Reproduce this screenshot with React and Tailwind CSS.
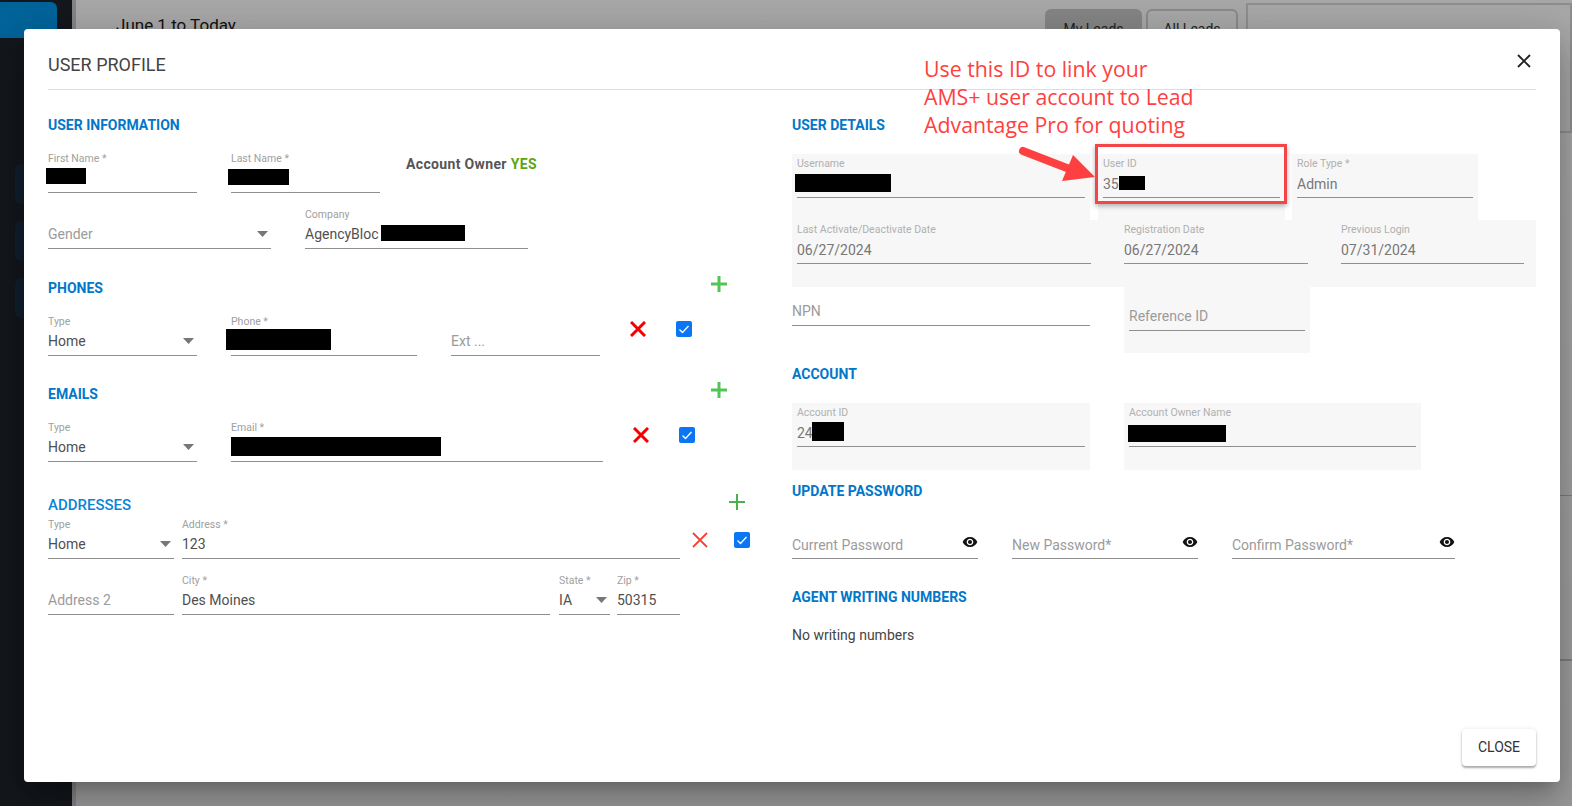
const Redact = ({ className }) => <span className={`absolute bg-black ${className}`} />

const Caret = () => (
  <svg width="11" height="6" viewBox="0 0 11 6" className="shrink-0"><path d="M0 0h11L5.5 6z" fill="#777" /></svg>
)

const Field = ({ label, value, placeholder, select, dim, lift, className = '', children }) => (
  <div className={`relative shrink-0 border-b border-[#8f8f8f] ${className}`}>
    {label && <div className={`h-[15px] pt-[1px] text-[10.5px] leading-[14px] whitespace-nowrap ${dim ? 'text-[#b0b0b0]' : 'text-[#a0a0a0]'}`}>{label}</div>}
    <div className={`flex h-[20px] items-center justify-between pr-[3px] text-[14px] leading-[20px] whitespace-nowrap ${label ? (lift ? 'mt-[2px] mb-[4px]' : 'mt-[3px] mb-[3px]') : 'mb-[4px]'} ${placeholder ? 'text-[#9b9b9b]' : dim ? 'text-[#777]' : 'text-[#4f4f4f]'}`}>
      <span>{value || placeholder}</span>
      {select && <Caret />}
    </div>
    {children}
  </div>
)

const Heading = ({ children, className = '' }) => (
  <h3 className={`h-[20px] text-[14px] leading-[21px] font-bold text-[#0277c9] whitespace-nowrap ${className}`}>{children}</h3>
)

const Plus = ({ thin }) => (
  <svg width="18" height="18" viewBox="0 0 18 18" className="shrink-0">
    <path d="M9 1v16M1 9h16" stroke={thin ? '#4caf50' : '#52c455'} strokeWidth={thin ? 2 : 3} fill="none" />
  </svg>
)

const Cross = ({ thin }) => (
  <svg width="16" height="16" viewBox="0 0 16 16" className="shrink-0">
    <path d="M1 1l14 14M15 1L1 15" stroke={thin ? '#f44336' : '#f50000'} strokeWidth={thin ? 1.8 : 3} fill="none" />
  </svg>
)

const Check = () => (
  <span className="flex h-[16px] w-[16px] shrink-0 items-center justify-center rounded-[2px] bg-[#0a75f5]">
    <svg width="12" height="12" viewBox="0 0 12 12"><path d="M1.5 6.5l3 3 6-6.5" stroke="#fff" strokeWidth="1.3" fill="none" /></svg>
  </span>
)

const Eye = () => (
  <svg width="16" height="16" viewBox="0 0 24 24" className="absolute right-0 top-[17px]">
    <path fill="#111" d="M12 4.5C7 4.5 2.73 7.61 1 12c1.73 4.39 6 7.5 11 7.5s9.27-3.11 11-7.5c-1.73-4.39-6-7.5-11-7.5zM12 17c-2.76 0-5-2.24-5-5s2.24-5 5-5 5 2.24 5 5-2.24 5-5 5zm0-8c-1.66 0-3 1.34-3 3s1.34 3 3 3 3-1.34 3-3-1.34-3-3-3z" />
  </svg>
)

const Backdrop = () => (
  <div className="flex h-[806px] w-full overflow-hidden bg-[#14171c]">
    <aside className="flex w-[72px] shrink-0 flex-col">
      <div className="mt-[2px] h-[36px] w-[57px] rounded-tr-md bg-[#00649b]" />
      <div className="mt-[126px] flex flex-col gap-[17px] pl-[15px]">
        <div className="h-[40px] w-[42px] rounded-md bg-[#11202e]" />
        <div className="h-[40px] w-[42px] rounded-md bg-[#11202e]" />
        <div className="h-[40px] w-[42px] rounded-md bg-[#11202e]" />
      </div>
    </aside>
    <main className="flex-1 border-l-[4px] border-[#858585] bg-gradient-to-b from-[#a8a8a8] to-[#9c9c9c]">
      <div className="flex items-start pt-[3px]">
        <div className="ml-[40px] mt-[10px] text-[17px] leading-6 text-[#111]">June 1 to Today</div>
        <div className="ml-auto mt-[6px] flex gap-[4px]">
          <div className="h-[40px] w-[97px] rounded-md bg-[#858585] pt-[10px] text-center text-sm text-[#222]">My Leads</div>
          <div className="h-[40px] w-[92px] rounded-md border-2 border-[#8a8a8a] pt-[8px] text-center text-sm text-[#222]">All Leads</div>
        </div>
        <div className="ml-[8px] h-[130px] w-[326px] border-2 border-[#8e8e8e]" />
      </div>
      <div className="mt-[362px] h-px bg-[#7d7d7d]" />
      <div className="mt-[163px] h-[2px] bg-[#7d7d7d]" />
    </main>
  </div>
)

const UserInfo = () => (
  <div className="w-[768px] shrink-0 pl-[24px]">
    <Heading className="mt-[25px]">USER INFORMATION</Heading>
    <div className="mt-[16px] flex items-start gap-[34px]">
      <Field lift label="First Name *" className="w-[149px]"><Redact className="left-[-2px] top-[17px] h-[16px] w-[40px]" /></Field>
      <Field lift label="Last Name *" className="w-[149px]"><Redact className="left-[-3px] top-[18px] h-[16px] w-[61px]" /></Field>
      <div className="ml-[-8px] mt-[3px] text-[14px] leading-[20px] font-bold tracking-[0.35px] text-[#555]">Account Owner <span className="text-[#5ca612]">YES</span></div>
    </div>
    <div className="mt-[14px] flex items-start gap-[34px]">
      <Field lift label=" " placeholder="Gender" select className="w-[223px]" />
      <Field lift label="Company" value="AgencyBloc" className="w-[223px]"><Redact className="left-[76px] top-[18px] h-[16px] w-[84px]" /></Field>
    </div>

    <div className="mt-[29px] flex w-[680px] items-start justify-between">
      <Heading>PHONES</Heading>
      <div className="mt-[-3px]"><Plus /></div>
    </div>
    <div className="mt-[16px] flex items-start">
      <Field lift label="Type" value="Home" select className="w-[149px]" />
      <Field lift label="Phone *" className="ml-[34px] w-[186px]"><Redact className="left-[-5px] top-[15px] h-[21px] w-[105px]" /></Field>
      <Field lift label=" " placeholder="Ext ..." className="ml-[34px] w-[149px]" />
      <div className="ml-[30px] mt-[7px]"><Cross /></div>
      <div className="ml-[30px] mt-[7px]"><Check /></div>
    </div>

    <div className="mt-[28px] flex w-[680px] items-start justify-between">
      <Heading>EMAILS</Heading>
      <div className="mt-[-3px]"><Plus /></div>
    </div>
    <div className="mt-[16px] flex items-start">
      <Field lift label="Type" value="Home" select className="w-[149px]" />
      <Field lift label="Email *" className="ml-[34px] w-[372px]"><Redact className="left-0 top-[17px] h-[19px] w-[210px]" /></Field>
      <div className="ml-[30px] mt-[7px]"><Cross /></div>
      <div className="ml-[30px] mt-[7px]"><Check /></div>
    </div>

    <div className="mt-[33px] flex w-[698px] items-start justify-between">
      <h3 className="h-[20px] text-[15px] leading-[20px] font-medium text-[#0a84d6]">ADDRESSES</h3>
      <div className="mt-[-2px]"><Plus thin /></div>
    </div>
    <div className="mt-[2px] flex items-start">
      <Field lift label="Type" value="Home" select className="w-[126px]" />
      <Field lift label="Address *" value="123" className="ml-[8px] w-[498px]" />
      <div className="ml-[12px] mt-[15px]"><Cross thin /></div>
      <div className="ml-[26px] mt-[15px]"><Check /></div>
    </div>
    <div className="mt-[14px] flex items-start">
      <Field lift label=" " placeholder="Address 2" className="w-[126px]" />
      <Field lift label="City *" value="Des Moines" className="ml-[8px] w-[368px]" />
      <Field lift label="State *" value="IA" select className="ml-[9px] w-[51px]" />
      <Field lift label="Zip *" value="50315" className="ml-[7px] w-[63px]" />
    </div>
  </div>
)

const UserDetails = () => (
  <div className="w-[744px] shrink-0">
    <Heading className="mt-[25px]">USER DETAILS</Heading>
    <div className="mt-[19px] flex">
      <div className="h-[66px] w-[298px] bg-[#f7f7f7] px-[5px] pt-[2px]">
        <Field label="Username" dim><Redact className="left-[-2px] top-[18px] h-[18px] w-[96px]" /></Field>
      </div>
      <div className="ml-[8px] h-[66px] w-[187px] bg-[#f7f7f7] px-[5px] pt-[2px]">
        <Field label="User ID" value="35" dim><Redact className="left-[16px] top-[20px] h-[14px] w-[26px]" /></Field>
      </div>
      <div className="ml-[7px] h-[66px] w-[186px] bg-[#f7f7f7] px-[5px] pt-[2px]">
        <Field label="Role Type *" value="Admin" dim />
      </div>
    </div>
    <div className="flex h-[67px] items-start gap-[33px] bg-[#f7f7f7] px-[5px] pt-[2px]">
      <Field label="Last Activate/Deactivate Date" value="06/27/2024" dim className="w-[294px]" />
      <Field label="Registration Date" value="06/27/2024" dim className="w-[184px]" />
      <Field label="Previous Login" value="07/31/2024" dim className="w-[183px]" />
    </div>
    <div className="flex items-start">
      <Field placeholder="NPN" className="mt-[14px] w-[298px]" />
      <div className="ml-[34px] h-[66px] w-[186px] bg-[#f7f7f7] px-[5px] pt-[19px]">
        <Field placeholder="Reference ID" />
      </div>
    </div>

    <Heading className="mt-[11px]">ACCOUNT</Heading>
    <div className="mt-[19px] flex gap-[34px]">
      <div className="h-[67px] w-[298px] bg-[#f7f7f7] px-[5px] pt-[2px]">
        <Field label="Account ID" value="24" dim><Redact className="left-[15px] top-[17px] h-[19px] w-[32px]" /></Field>
      </div>
      <div className="h-[67px] w-[297px] bg-[#f7f7f7] px-[5px] pt-[2px]">
        <Field label="Account Owner Name" dim><Redact className="left-[-1px] top-[20px] h-[17px] w-[98px]" /></Field>
      </div>
    </div>

    <Heading className="mt-[11px]">UPDATE PASSWORD</Heading>
    <div className="mt-[16px] flex gap-[34px]">
      <Field label=" " placeholder="Current Password" className="w-[186px]"><Eye /></Field>
      <Field label=" " placeholder="New Password*" className="w-[186px]"><Eye /></Field>
      <Field label=" " placeholder="Confirm Password*" className="w-[223px]"><Eye /></Field>
    </div>

    <Heading className="mt-[28px]">AGENT WRITING NUMBERS</Heading>
    <p className="mt-[18px] text-[14px] leading-[20px] text-[#444]">No writing numbers</p>
  </div>
)

export default function App() {
  return (
    <div className="relative h-[806px] w-full overflow-hidden font-['Roboto',sans-serif]">
      <Backdrop />

      {/* Dialog */}
      <div className="absolute left-[24px] top-[29px] flex h-[753px] w-[1536px] flex-col rounded-[4px] bg-white shadow-[0_11px_15px_-7px_rgba(0,0,0,0.2),0_24px_38px_3px_rgba(0,0,0,0.14),0_9px_46px_8px_rgba(0,0,0,0.12)]">
        <header className="mx-[24px] flex h-[61px] shrink-0 items-center justify-between border-b border-[#dedede] pt-[11px]">
          <h2 className="text-[18px] leading-6 text-[#444]">USER PROFILE</h2>
          <svg width="16" height="16" viewBox="0 0 16 16" className="mb-[8px] mr-[4px]"><path d="M2 2l12 12M14 2L2 14" stroke="#222" strokeWidth="1.8" fill="none" /></svg>
        </header>
        <div className="flex flex-1">
          <UserInfo />
          <UserDetails />
        </div>
        <footer className="flex justify-end pb-[16px] pr-[24px]">
          <button className="h-[37px] w-[74px] rounded-[4px] bg-white text-[14px] text-[#333] shadow-[0_2px_2px_rgba(0,0,0,0.3),0_0_4px_rgba(0,0,0,0.1)]">CLOSE</button>
        </footer>

        {/* Annotation */}
        <div className="absolute left-[900px] top-[26px] text-[21.3px] leading-[28px] text-[#ff4040] font-['Open_Sans',sans-serif]">
          Use this ID to link your<br />AMS+ user account to Lead<br />Advantage Pro for quoting
        </div>
        <div className="absolute left-[1071px] top-[115px] h-[60px] w-[192px] border-[3px] border-[#f24649] shadow-[0_2px_5px_rgba(0,0,0,0.3)]" />
        <svg className="absolute left-[990px] top-[115px]" width="85" height="45" viewBox="0 0 85 45">
          <path d="M9 7L58 26" stroke="#ff4040" strokeWidth="8" strokeLinecap="round" fill="none" />
          <path d="M59 11L81 33L48 37z" fill="#ff4040" />
        </svg>
      </div>
    </div>
  )
}
